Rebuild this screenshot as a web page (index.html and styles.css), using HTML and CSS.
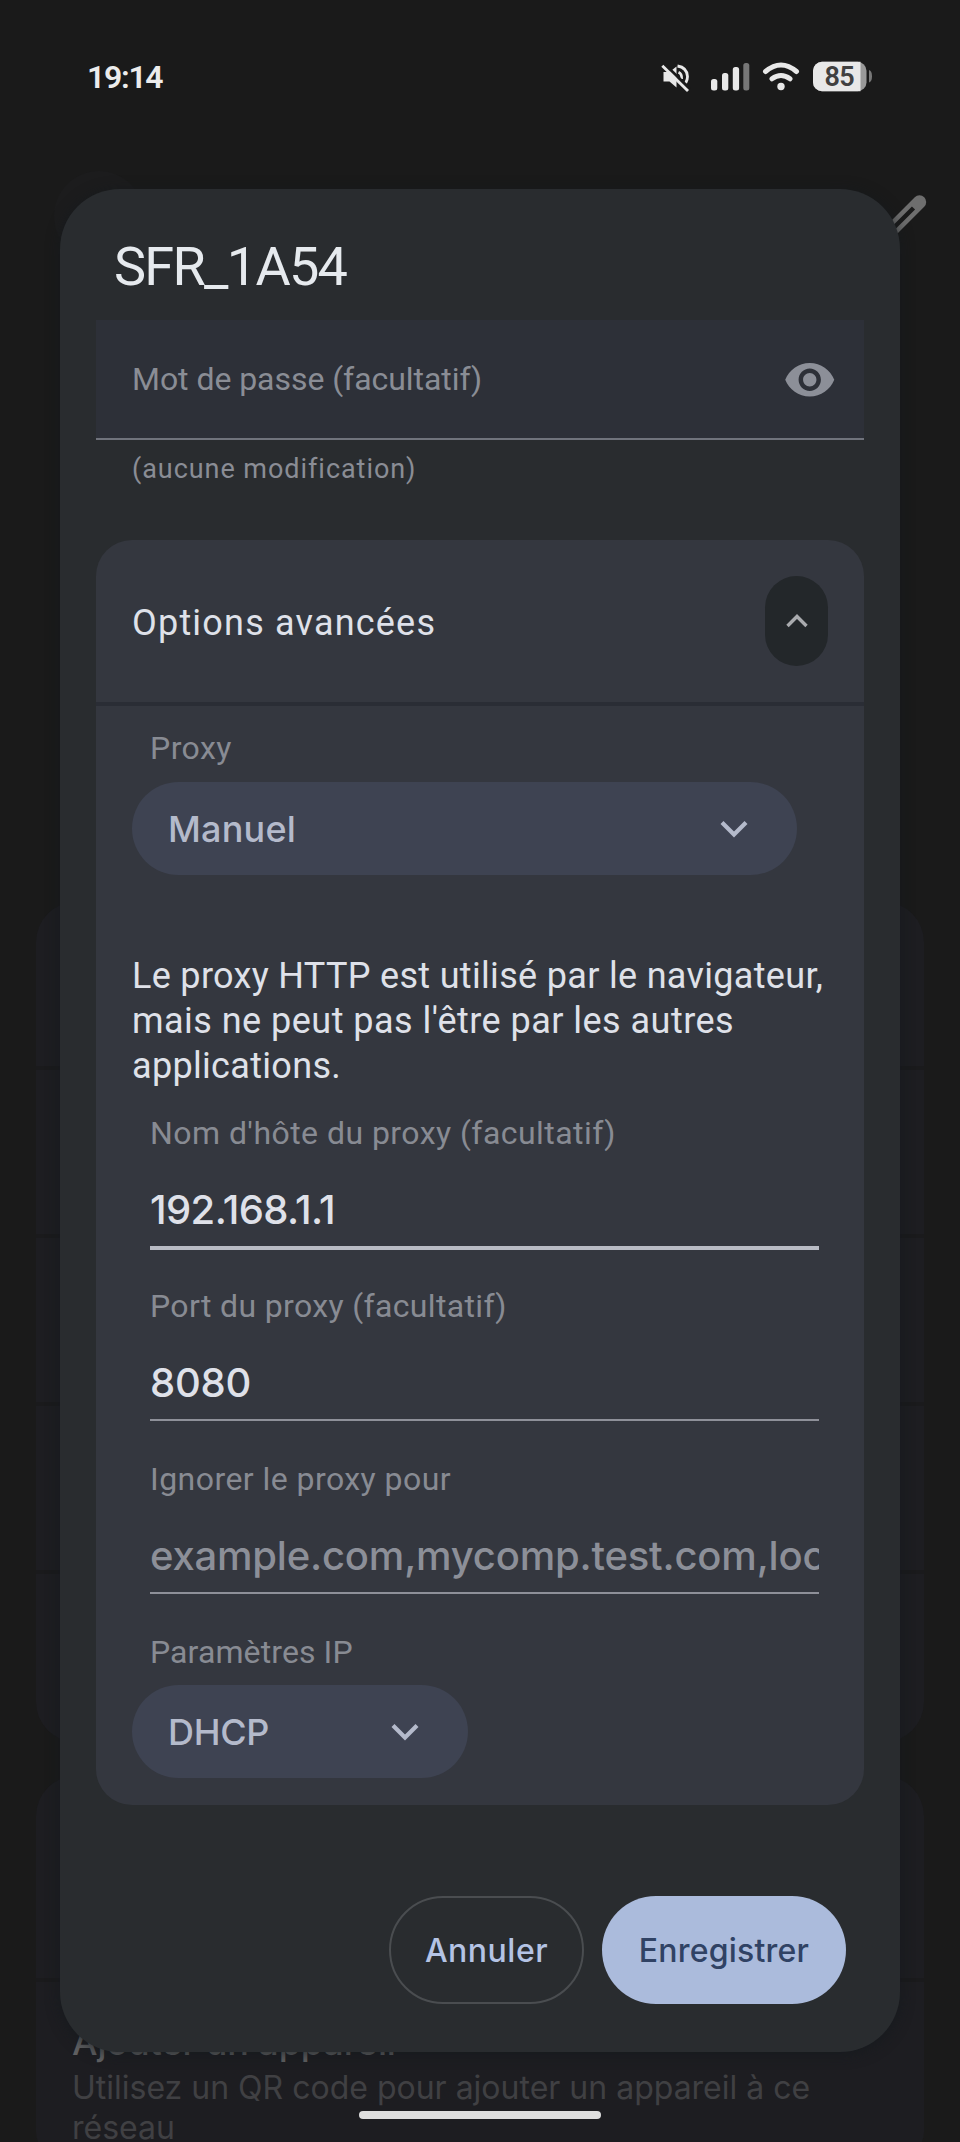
FILE: index.html
```html
<!DOCTYPE html>
<html lang="fr">
<head>
<meta charset="utf-8">
<title>SFR_1A54</title>
<link rel="stylesheet" href="styles.css">
</head>
<body>
<div class="screen">
  <header class="status">
    <span class="clock">19:14</span>
    <svg class="status-icons" viewBox="0 0 220 40" width="220" height="40">
      <path d="M3.500 12h6l7-5.500V27.500l-7-6h-6z" fill="#e8e8e8"/>
      <path d="M17.500 6q9.500 1.500 10 10.500 0 3.500-1.800 6.500" fill="none" stroke="#e8e8e8" stroke-width="2.800"/>
      <path d="M18.500 12.200q3.600 1.700 3.200 6.800" fill="none" stroke="#e8e8e8" stroke-width="2.600"/>
      <path d="M4 3.500L30 29" stroke="#1a1a1a" stroke-width="3"/>
      <path d="M2.300 5.800L28 31" stroke="#e8e8e8" stroke-width="2.900"/>
      <g fill="#e8e8e8">
        <rect x="51" y="19" width="6.300" height="11.500" rx="2.500"/>
        <rect x="62" y="13" width="6.300" height="17.500" rx="2.500"/>
        <rect x="72.800" y="7" width="6.300" height="23.500" rx="2.500"/>
        <rect x="83.300" y="3" width="6" height="27.500" rx="2.500" fill="#777"/>
        <circle cx="121" cy="26.500" r="3.700"/>
      </g>
      <path d="M105.500 11.500q15.500-13 31 0M112 18.800q9-6.500 18 0" fill="none" stroke="#e8e8e8" stroke-width="5" stroke-linecap="round"/>
      <rect x="153" y="1.800" width="53.500" height="29.400" rx="9" fill="#999"/>
      <path d="M162 1.800h38.500v29.400h-38.500a9 9 0 0 1-9-9v-11.400a9 9 0 0 1 9-9z" fill="#e8e8e8"/>
      <path d="M209 10q3 1 3 6.200t-3 6.200z" fill="#777"/>
      <text class="level" x="164.500" y="26.300">85</text>
    </svg>
  </header>

  <div class="back-circle"></div>
  <svg class="pencil" viewBox="0 0 50 60" width="50" height="60">
    <path d="M-8 58.500L39.500 11" stroke="#6e6e6e" stroke-width="13.400" stroke-linecap="round"/>
    <path d="M-8 58.500L33.500 17" stroke="#1a1a1a" stroke-width="4.400"/>
  </svg>

  <main class="page">
    <section class="card">
      <div class="row"></div><div class="row"></div><div class="row"></div><div class="row"></div><div class="row"></div>
    </section>
    <section class="card card-last">
      <div class="row tall"></div>
      <div class="device">
        <p class="device-title">Ajouter un appareil</p>
        <p class="device-text">Utilisez un QR code pour ajouter un appareil à ce<br>réseau</p>
      </div>
    </section>
  </main>

  <div class="dialog" role="dialog">
    <h1 class="title">SFR_1A54</h1>
    <div class="password">
      <span class="password-label">Mot de passe (facultatif)</span>
      <svg viewBox="0 0 24 24" width="53.500" height="53.500" fill="#8c8f98"><path d="M12 4.500C7 4.500 2.730 7.610 1 12c1.730 4.390 6 7.500 11 7.500s9.270-3.110 11-7.500c-1.730-4.390-6-7.500-11-7.500zM12 17c-2.760 0-5-2.240-5-5s2.240-5 5-5 5 2.240 5 5-2.240 5-5 5zm0-8c-1.660 0-3 1.340-3 3s1.340 3 3 3 3-1.340 3-3-1.340-3-3-3z"/></svg>
    </div>
    <p class="helper">(aucune modification)</p>

    <section class="advanced">
      <div class="adv-head">
        <h2 class="adv-title">Options avancées</h2>
        <span class="toggle"><svg viewBox="0 0 24 16" width="24" height="16"><path d="M2.500 13L12 3.500 21.500 13" fill="none" stroke="#a9abae" stroke-width="3.400"/></svg></span>
      </div>
      <div class="adv-body">
        <div class="label indent">Proxy</div>
        <div class="select wide"><span class="manual">Manuel</span><svg viewBox="0 0 28 18" width="28" height="18"><path d="M2 2.500L14 14.500 26 2.500" fill="none" stroke="#b4bacb" stroke-width="4.200"/></svg></div>
        <p class="note">Le proxy HTTP est utilisé par le navigateur,<br><span class="note-mid">mais ne peut pas l'être par les autres</span><br>applications.</p>
        <div class="field"><div class="label">Nom d'hôte du proxy (facultatif)</div><div class="value active host">192.168.1.1</div></div>
        <div class="field"><div class="label port-label">Port du proxy (facultatif)</div><div class="value port">8080</div></div>
        <div class="field"><div class="label">Ignorer le proxy pour</div><div class="value hint">example.com,mycomp.test.com,loc</div></div>
        <div class="label indent ip">Paramètres IP</div>
        <div class="select narrow"><span class="dhcp">DHCP</span><svg viewBox="0 0 28 18" width="28" height="18"><path d="M2 2.500L14 14.500 26 2.500" fill="none" stroke="#b4bacb" stroke-width="4.200"/></svg></div>
      </div>
    </section>

    <div class="actions">
      <button class="btn cancel">Annuler</button>
      <button class="btn save">Enregistrer</button>
    </div>
  </div>
  <div class="handle"></div>
</div>
</body>
</html>
```
FILE: styles.css
```css
* { box-sizing: border-box; }
body, h1, h2, p { margin: 0; font-weight: 400; }
body { background: #1a1a1a; font-family: Roboto, "Noto Sans", sans-serif; }
svg { display: block; flex: none; }

.screen { position: relative; width: 960px; height: 2142px; overflow: hidden; background: #1a1a1a; }

.status { display: flex; justify-content: space-between; height: 140px; padding: 57px 80px 0 87px; color: #ececec; }
.clock { font-size: 32px; line-height: 40px; font-weight: 600; letter-spacing: -1.3px; }
.status-icons { margin-top: 3px; }
.level { font-size: 27px; font-weight: 600; letter-spacing: -0.6px; fill: #404040; }

.back-circle { position: absolute; left: 54px; top: 171px; width: 90px; height: 90px; border-radius: 50%; background: #1c1c1d; }
.pencil { position: absolute; left: 880px; top: 191px; }

.page { padding: 762px 36px 0; }
.card { border-radius: 40px; overflow: hidden; background: #1d1d21; }
.row { height: 168px; border-bottom: 4px solid #1a1a1c; }
.card .row:last-child { border-bottom: 0; }
.card-last { height: 380px; margin-top: 34px; border-radius: 40px 40px 24px 24px; }
.row.tall { height: 206px; }
.device { padding: 38px 36px 0; font-family: Inter, sans-serif; }
.device-title { color: #606062; font-size: 36px; line-height: 44px; font-weight: 500; letter-spacing: -.1px; }
.device-text { margin-top: 4px; color: #404043; font-size: 32px; line-height: 40px; white-space: nowrap; }

.dialog {
  position: absolute; left: 60px; top: 189px; width: 840px; height: 1863px;
  padding: 0 36px; border-radius: 60px; background: #292c2f;
  box-shadow: 0 2px 14px rgba(20, 26, 30, .75);
}
.title { height: 131px; padding: 48px 0 0 18px; color: #e6eaee; font-size: 54px; line-height: 60px; letter-spacing: -1.7px; }
.password {
  display: flex; align-items: center; justify-content: space-between;
  height: 120px; padding: 1px 28px 0 36px;
  border-bottom: 2px solid #70737c; background: #2d3038;
  color: #8a8d95; font-size: 32px;
}
.password-label { padding-bottom: 2px; letter-spacing: -.05px; }
.helper { height: 100px; padding: 11px 36px 0; color: #8a8d95; font-size: 27px; line-height: 36px; letter-spacing: .95px; }

.advanced { height: 1265px; border-radius: 36px; background: #34373f; }
.adv-head { display: flex; align-items: center; justify-content: space-between; height: 166px; padding: 0 36px; border-bottom: 4px solid #2a2d35; }
.adv-title { padding-top: 3px; color: #dfe1e9; font-size: 36px; line-height: 44px; letter-spacing: 1.2px; }
.toggle { display: flex; align-items: center; justify-content: center; width: 63px; height: 90px; border-radius: 32px; background: #23272a; }
.adv-body { padding: 26px 36px 0; }
.label { height: 32px; color: #888b93; font-size: 32px; line-height: 32px; letter-spacing: .45px; white-space: nowrap; }
.port-label { letter-spacing: .35px; }
.indent { margin-left: 18px; }
.ip { letter-spacing: .1px; }
.select { display: flex; align-items: center; justify-content: space-between; height: 93px; padding: 0 49px 0 36px; border-radius: 47px; background: #3e4352; color: #b4bacb; font: 500 36px Inter, sans-serif; }
.wide { width: 665px; margin-top: 18px; }
.narrow { width: 336px; margin-top: 17px; }
.manual { letter-spacing: .2px; }
.dhcp { letter-spacing: -.3px; }
.note { margin: 79px -20px 28px 0; color: #dfe1e9; font-size: 36px; line-height: 45px; letter-spacing: .32px; white-space: nowrap; }
.note-mid { letter-spacing: .47px; }
.field { width: 669px; height: 173px; margin-left: 18px; }
.value { height: 99px; padding-top: 37px; overflow: hidden; border-bottom: 2px solid #8e9099; color: #dfe1e9; font: 500 40px/48px Inter, sans-serif; white-space: nowrap; }
.value.active { height: 101px; border-bottom: 4px solid #b8bbc4; }
.host { letter-spacing: -.6px; }
.port { letter-spacing: -.2px; }
.hint { color: #8c8f98; letter-spacing: -.2px; }

.actions { display: flex; justify-content: flex-end; gap: 18px; padding: 91px 18px 0 0; }
.btn { height: 108px; padding: 0; border: 0; border-radius: 54px; background: none; font: 500 32px Inter, sans-serif; }
.cancel { width: 195px; border: 2px solid #4a4d50; color: #b4c3e4; letter-spacing: .5px; }
.save { width: 244px; background: #abbbdc; color: #304264; letter-spacing: .2px; }

.handle { position: absolute; left: 359px; top: 2111px; width: 242px; height: 8px; border-radius: 4px; background: #dedede; }
```
